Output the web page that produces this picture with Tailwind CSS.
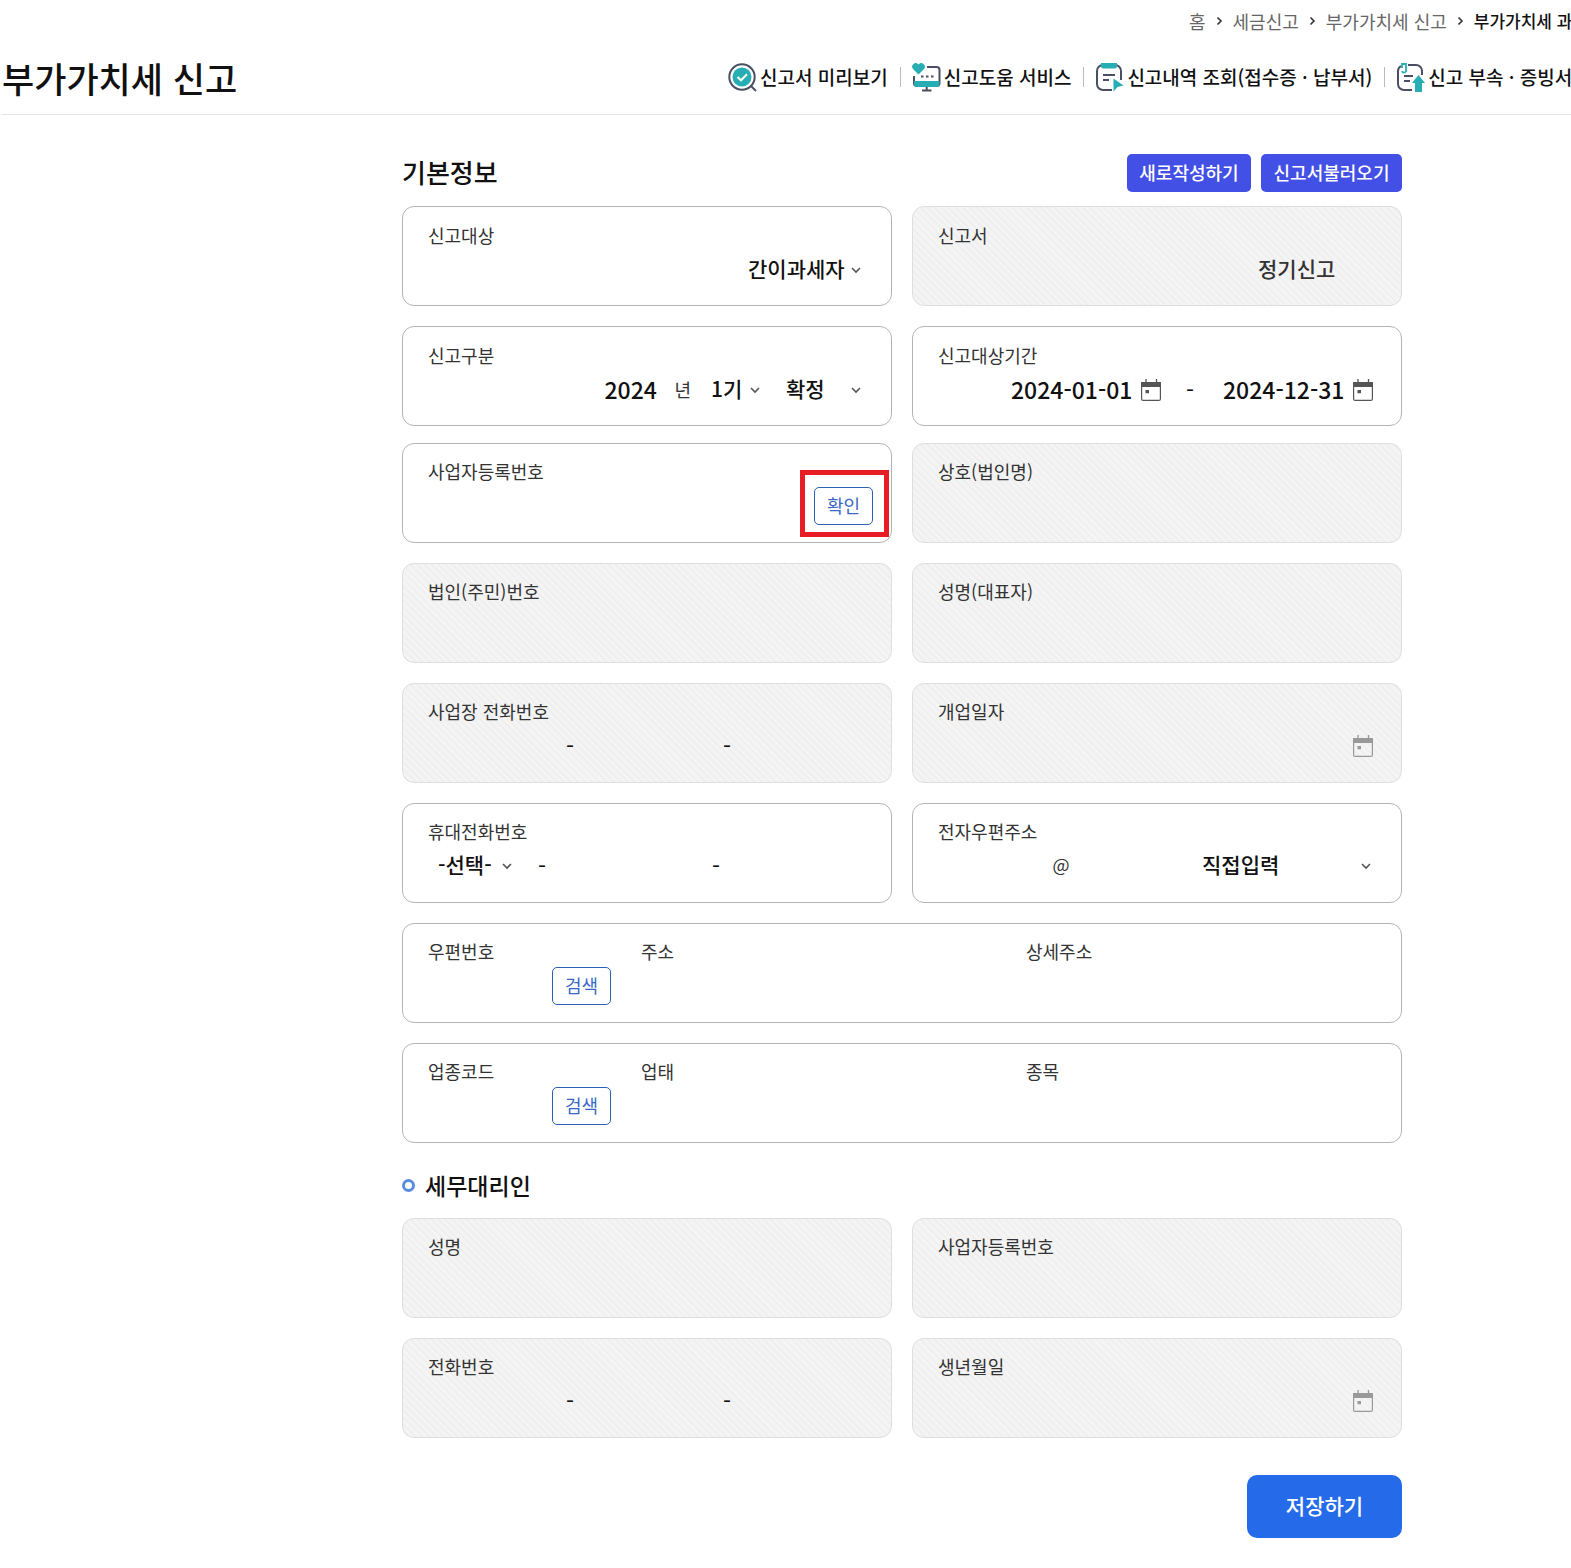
<!DOCTYPE html>
<html lang="ko">

<head>
    <meta charset="UTF-8">
    <meta name="viewport" content="width=device-width, initial-scale=1.0">
    <title>부가가치세 신고</title>
    <script src="https://cdn.jsdelivr.net/npm/@tailwindcss/browser@4"></script>
    <style>
        body {
            font-family: "Noto Sans CJK KR", "Noto Sans", sans-serif;
        }

        .stripe {
            background: repeating-linear-gradient(45deg, #f4f4f4 0 3px, #efefef 3px 5px);
        }
    </style>
</head>

<body class="bg-white text-[#111] overflow-x-hidden">

    <!-- icons -->
    <svg class="hidden" xmlns="http://www.w3.org/2000/svg">
        <symbol id="chevron" viewBox="0 0 10 10">
            <path d="M1 3l4 4 4-4" fill="none" stroke="#555" stroke-width="1.6" />
        </symbol>
        <symbol id="arrow" viewBox="0 0 7 10">
            <path d="M1.5 1.5L5 5 1.5 8.5" fill="none" stroke="#333" stroke-width="1.6" />
        </symbol>
        <symbol id="calendar" viewBox="0 0 20 22">
            <path d="M5 0v4M15.500 0v4" stroke="currentColor" stroke-width="1.300" />
            <rect x=".6" y="3.600" width="18.800" height="17.800" rx="1.500" fill="none" stroke="currentColor" stroke-width="1.200" />
            <path d="M0 3h20v5H0zM4.500 11H8v3.200H4.500z" fill="currentColor" />
        </symbol>
    </svg>

    <div class="min-w-[1800px] ml-0.5">
        <header class="border-b border-[#e4e4e4]">
            <nav class="flex justify-end pt-2 pb-0.5" aria-label="breadcrumb">
                <ol class="flex items-center gap-2.5 w-[613px] h-[26px] text-[18px] text-[#666] whitespace-nowrap">
                    <li><a href="#">홈</a></li>
                    <li><svg class="w-[7px] h-[10px]"><use href="#arrow" /></svg></li>
                    <li><a href="#">세금신고</a></li>
                    <li><svg class="w-[7px] h-[10px]"><use href="#arrow" /></svg></li>
                    <li><a href="#">부가가치세 신고</a></li>
                    <li><svg class="w-[7px] h-[10px]"><use href="#arrow" /></svg></li>
                    <li class="text-[17px] font-medium text-[#111]">부가가치세 과</li>
                </ol>
            </nav>
            <div class="flex items-center justify-between h-[78px] pt-1">
                <h1 class="text-[35px] leading-none font-medium">부가가치세 신고</h1>
                <ul class="flex items-center w-[1074px] text-[19px] font-medium whitespace-nowrap">
                    <li>
                        <a href="#" class="flex items-center gap-[3px]">
                            <svg class="w-[29px] h-[29px]" viewBox="0 0 29 29" fill="none">
                                <circle cx="14" cy="14" r="12.700" stroke="#4a4f63" stroke-width="2" />
                                <circle cx="14" cy="14" r="9.500" fill="#27aeb4" />
                                <path d="M9.500 14l3.500 3.300 6-6" stroke="#fff" stroke-width="2" />
                                <path d="M22.500 22.500l5.500 5.500" stroke="#4a4f63" stroke-width="2" />
                            </svg>
                            신고서 미리보기
                        </a>
                    </li>
                    <li class="w-px h-5 bg-[#bbb] ml-3 mr-[11px]"></li>
                    <li>
                        <a href="#" class="flex items-center gap-[3px]">
                            <svg class="w-[29px] h-[29px]" viewBox="0 0 29 29" fill="none">
                                <path d="M15 4h9.500a3 3 0 0 1 3 3v13a3 3 0 0 1-3 3H5a3 3 0 0 1-3-3v-7" stroke="#4a4f63" stroke-width="2" />
                                <path d="M2 18h25.500v3a3 3 0 0 1-3 3H5a3 3 0 0 1-3-3z" fill="#27aeb4" />
                                <path d="M14.700 24v4M10 27.500h9.500" stroke="#4a4f63" stroke-width="2" />
                                <path d="M9 12.500h2.500v2H9zM14 12.500h2.500v2H14zM19 12.500h2.500v2H19z" fill="#4a4f63" />
                                <path d="M6.500 11.500L1 6A3.400 3.400 0 0 1 6.500 1.500 3.400 3.400 0 0 1 12 6z" fill="#27aeb4" />
                            </svg>
                            신고도움 서비스
                        </a>
                    </li>
                    <li class="w-px h-5 bg-[#bbb] ml-3 mr-[11px]"></li>
                    <li>
                        <a href="#" class="flex items-center gap-[3px]">
                            <svg class="w-[29px] h-[29px]" viewBox="0 0 29 29" fill="none">
                                <path d="M17 27H8a6 6 0 0 1-6-6V8a6 6 0 0 1 6-6h12a6 6 0 0 1 6 6v9" stroke="#4a4f63" stroke-width="2" />
                                <path d="M6 0h16v3a2.500 2.500 0 0 1-2.500 2.500h-11A2.500 2.500 0 0 1 6 3z" fill="#27aeb4" />
                                <path d="M8 12h12M8 17h6" stroke="#4a4f63" stroke-width="2" />
                                <path d="M18.500 15.500l10 7-6 1.500-4 4.500z" fill="#27aeb4" />
                            </svg>
                            신고내역 조회(접수증 · 납부서)
                        </a>
                    </li>
                    <li class="w-px h-5 bg-[#bbb] ml-3 mr-[11px]"></li>
                    <li>
                        <a href="#" class="flex items-center gap-[3px]">
                            <svg class="w-[29px] h-[29px]" viewBox="0 0 29 29" fill="none">
                                <path d="M16 27H8a6 6 0 0 1-6-6V8a6 6 0 0 1 3-5M12 2h8a6 6 0 0 1 6 6v4" stroke="#4a4f63" stroke-width="2" />
                                <path d="M6 5V1h4v6a2 2 0 0 1-4 1" stroke="#27aeb4" stroke-width="1.800" />
                                <path d="M8 13h9M8 18h6" stroke="#4a4f63" stroke-width="2" />
                                <path d="M22.500 12l6.500 8h-3v9h-7v-9h-3z" fill="#27aeb4" />
                            </svg>
                            신고 부속 · 증빙서
                        </a>
                    </li>
                </ul>
            </div>
        </header>

        <main class="w-[1000px] mx-auto pb-7">
            <!-- 기본정보 -->
            <div class="flex items-center justify-between pt-[39px] pb-3.5">
                <h2 class="text-[26px] leading-[36px] pb-0.5 font-medium">기본정보</h2>
                <div class="flex gap-2.5">
                    <button type="button" class="w-[124px] h-[38px] pb-0.5 rounded-[5px] bg-[#4350e6] text-white text-[18px] font-medium">새로작성하기</button>
                    <button type="button" class="w-[141px] h-[38px] pb-0.5 rounded-[5px] bg-[#4350e6] text-white text-[18px] font-medium">신고서불러오기</button>
                </div>
            </div>

            <form>
                <div class="grid grid-cols-2 gap-5">
                    <div class="h-[100px] border border-[#b4b4b4] rounded-xl pt-[17px] pl-[25px]">
                        <label for="target" class="block text-[18px] leading-[22px] mb-0.5 text-[#333]">신고대상</label>
                        <div class="flex items-center justify-end h-11 pr-[30px]">
                            <select id="target" class="appearance-none w-[103px] pb-0.5 text-[21px] font-medium">
                                <option>간이과세자</option>
                            </select>
                            <svg class="w-2.5 h-2.5"><use href="#chevron" /></svg>
                        </div>
                    </div>
                    <div class="stripe h-[100px] border border-[#dedede] rounded-xl pt-[17px] pl-[25px]">
                        <label for="report" class="block text-[18px] leading-[22px] mb-0.5 text-[#333]">신고서</label>
                        <div class="flex items-center justify-end h-11 pr-[30px]">
                            <input id="report" type="text" value="정기신고" disabled class="w-[113px] pb-0.5 text-[21px] font-medium text-[#333]">
                        </div>
                    </div>
                    <div class="h-[100px] border border-[#b4b4b4] rounded-xl pt-[17px] pl-[25px]">
                        <label for="year" class="block text-[18px] leading-[22px] mb-0.5 text-[#333]">신고구분</label>
                        <div class="flex items-center justify-end h-11 pr-[30px]">
                            <input id="year" type="text" value="2024" class="w-[70px] pb-0.5 text-[23px] font-medium">
                            <span class="pb-0.5 text-[18px] text-[#333] mr-5">년</span>
                            <select aria-label="기수" class="appearance-none w-[39px] pb-0.5 text-[21px] font-medium">
                                <option>1기</option>
                            </select>
                            <svg class="w-2.5 h-2.5 mr-[26px]"><use href="#chevron" /></svg>
                            <select aria-label="구분" class="appearance-none w-[65px] pb-0.5 text-[21px] font-medium">
                                <option>확정</option>
                            </select>
                            <svg class="w-2.5 h-2.5"><use href="#chevron" /></svg>
                        </div>
                    </div>
                    <div class="h-[100px] border border-[#b4b4b4] rounded-xl pt-[17px] pl-[25px]">
                        <label for="from" class="block text-[18px] leading-[22px] mb-0.5 text-[#333]">신고대상기간</label>
                        <div class="flex items-center justify-end h-11 pr-7">
                            <input id="from" type="text" value="2024-01-01" class="w-[130px] pb-0.5 text-[23px] font-medium">
                            <button type="button" aria-label="시작일 선택" class="text-[#555]"><svg class="block w-5 h-[22px]"><use href="#calendar" /></svg></button>
                            <span class="w-[62px] pr-1 pb-0.5 text-center text-[23px]">-</span>
                            <input aria-label="종료일" type="text" value="2024-12-31" class="w-[130px] pb-0.5 text-[23px] font-medium">
                            <button type="button" aria-label="종료일 선택" class="text-[#555]"><svg class="block w-5 h-[22px]"><use href="#calendar" /></svg></button>
                        </div>
                    </div>
                </div>

                <div class="grid grid-cols-2 gap-5 mt-[17px]">
                    <div class="relative h-[100px] border border-[#b4b4b4] rounded-xl pt-4 pl-[25px]">
                        <label for="bizno" class="block text-[18px] leading-[22px] mb-0.5 text-[#333]">사업자등록번호</label>
                        <div class="flex items-center h-11 pr-[18px]">
                            <input id="bizno" type="text" class="flex-1 min-w-0 text-[21px] font-medium">
                            <button type="button" class="w-[59px] h-[38px] pb-0.5 rounded-[5px] border border-[#2c62b4] text-[#3a68c8] text-[18px]">확인</button>
                        </div>
                        <div class="absolute top-[26px] right-0.5 w-[89px] h-[67px] border-5 border-[#e81c24] pointer-events-none"></div>
                    </div>
                    <div class="stripe h-[100px] border border-[#dedede] rounded-xl pt-4 pl-[25px]">
                        <label for="company" class="block text-[18px] leading-[22px] mb-0.5 text-[#333]">상호(법인명)</label>
                        <input id="company" type="text" disabled class="block h-11 w-full text-[21px]">
                    </div>
                    <div class="stripe h-[100px] border border-[#dedede] rounded-xl pt-4 pl-[25px]">
                        <label for="corpno" class="block text-[18px] leading-[22px] mb-0.5 text-[#333]">법인(주민)번호</label>
                        <input id="corpno" type="text" disabled class="block h-11 w-full text-[21px]">
                    </div>
                    <div class="stripe h-[100px] border border-[#dedede] rounded-xl pt-4 pl-[25px]">
                        <label for="ceo" class="block text-[18px] leading-[22px] mb-0.5 text-[#333]">성명(대표자)</label>
                        <input id="ceo" type="text" disabled class="block h-11 w-full text-[21px]">
                    </div>
                    <div class="stripe h-[100px] border border-[#dedede] rounded-xl pt-4 pl-[25px]">
                        <label for="tel" class="block text-[18px] leading-[22px] mb-0.5 text-[#333]">사업장 전화번호</label>
                        <div class="flex items-center h-11 pr-[18px] text-[23px]">
                            <input id="tel" type="text" disabled class="w-[130px]">
                            <span class="w-6 pb-0.5 text-center">-</span>
                            <input aria-label="국번" type="text" disabled class="w-[133px]">
                            <span class="w-6 pb-0.5 text-center">-</span>
                            <input aria-label="끝번호" type="text" disabled class="flex-1 min-w-0">
                        </div>
                    </div>
                    <div class="stripe h-[100px] border border-[#dedede] rounded-xl pt-4 pl-[25px]">
                        <label for="opened" class="block text-[18px] leading-[22px] mb-0.5 text-[#333]">개업일자</label>
                        <div class="flex items-center h-11 pr-7">
                            <input id="opened" type="text" disabled class="flex-1 min-w-0">
                            <button type="button" disabled aria-label="개업일자 선택" class="text-[#999]"><svg class="block w-5 h-[22px]"><use href="#calendar" /></svg></button>
                        </div>
                    </div>
                    <div class="h-[100px] border border-[#b4b4b4] rounded-xl pt-4 pl-[25px]">
                        <label for="mobile" class="block text-[18px] leading-[22px] mb-0.5 text-[#333]">휴대전화번호</label>
                        <div class="flex items-center h-11 pl-2.5 pr-[18px] text-[23px]">
                            <select id="mobile" class="appearance-none w-16 pb-0.5 text-[21px] font-medium">
                                <option>-선택-</option>
                            </select>
                            <svg class="w-2.5 h-2.5 mr-[18px]"><use href="#chevron" /></svg>
                            <span class="w-6 pb-0.5 text-center">-</span>
                            <input aria-label="국번" type="text" class="w-[150px]">
                            <span class="w-6 pb-0.5 text-center">-</span>
                            <input aria-label="끝번호" type="text" class="flex-1 min-w-0">
                        </div>
                    </div>
                    <div class="h-[100px] border border-[#b4b4b4] rounded-xl pt-4 pl-[25px]">
                        <label for="email" class="block text-[18px] leading-[22px] mb-0.5 text-[#333]">전자우편주소</label>
                        <div class="flex items-center h-11 pr-[30px]">
                            <input id="email" type="text" class="flex-1 min-w-0">
                            <span class="w-6 pb-1 text-center text-[18px] text-[#333]">@</span>
                            <input aria-label="도메인" type="text" class="w-[129px]">
                            <select aria-label="도메인 선택" class="appearance-none w-[159px] pb-0.5 text-[21px] font-medium">
                                <option>직접입력</option>
                            </select>
                            <svg class="w-2.5 h-2.5"><use href="#chevron" /></svg>
                        </div>
                    </div>
                    <div class="col-span-2 flex h-[100px] border border-[#b4b4b4] rounded-xl pt-4 px-[25px]">
                        <div class="w-[213px]">
                            <label for="zip" class="block text-[18px] leading-[22px] mb-0.5 text-[#333]">우편번호</label>
                            <div class="flex items-center h-11">
                                <input id="zip" type="text" class="w-[124px]">
                                <button type="button" class="w-[59px] h-[38px] pb-0.5 rounded-[5px] border border-[#2c62b4] text-[#3a68c8] text-[18px]">검색</button>
                            </div>
                        </div>
                        <div class="w-[385px]">
                            <label for="addr" class="block text-[18px] leading-[22px] mb-0.5 text-[#333]">주소</label>
                            <input id="addr" type="text" class="block h-11 w-full">
                        </div>
                        <div class="flex-1">
                            <label for="addr2" class="block text-[18px] leading-[22px] mb-0.5 text-[#333]">상세주소</label>
                            <input id="addr2" type="text" class="block h-11 w-full">
                        </div>
                    </div>
                    <div class="col-span-2 flex h-[100px] border border-[#b4b4b4] rounded-xl pt-4 px-[25px]">
                        <div class="w-[213px]">
                            <label for="code" class="block text-[18px] leading-[22px] mb-0.5 text-[#333]">업종코드</label>
                            <div class="flex items-center h-11">
                                <input id="code" type="text" class="w-[124px]">
                                <button type="button" class="w-[59px] h-[38px] pb-0.5 rounded-[5px] border border-[#2c62b4] text-[#3a68c8] text-[18px]">검색</button>
                            </div>
                        </div>
                        <div class="w-[385px]">
                            <label for="kind" class="block text-[18px] leading-[22px] mb-0.5 text-[#333]">업태</label>
                            <input id="kind" type="text" class="block h-11 w-full">
                        </div>
                        <div class="flex-1">
                            <label for="item" class="block text-[18px] leading-[22px] mb-0.5 text-[#333]">종목</label>
                            <input id="item" type="text" class="block h-11 w-full">
                        </div>
                    </div>
                </div>

                <!-- 세무대리인 -->
                <h3 class="flex items-center gap-2.5 mt-6 mb-[15px] text-[23px] leading-9 font-medium">
                    <span class="w-[13px] h-[13px] rounded-full border-3 border-[#5b8bdf]"></span>
                    세무대리인
                </h3>
                <div class="grid grid-cols-2 gap-5">
                    <div class="stripe h-[100px] border border-[#dedede] rounded-xl pt-4 pl-[25px]">
                        <label for="agent" class="block text-[18px] leading-[22px] mb-0.5 text-[#333]">성명</label>
                        <input id="agent" type="text" disabled class="block h-11 w-full">
                    </div>
                    <div class="stripe h-[100px] border border-[#dedede] rounded-xl pt-4 pl-[25px]">
                        <label for="agentno" class="block text-[18px] leading-[22px] mb-0.5 text-[#333]">사업자등록번호</label>
                        <input id="agentno" type="text" disabled class="block h-11 w-full">
                    </div>
                    <div class="stripe h-[100px] border border-[#dedede] rounded-xl pt-4 pl-[25px]">
                        <label for="agenttel" class="block text-[18px] leading-[22px] mb-0.5 text-[#333]">전화번호</label>
                        <div class="flex items-center h-11 pr-[18px] text-[23px]">
                            <input id="agenttel" type="text" disabled class="w-[130px]">
                            <span class="w-6 pb-0.5 text-center">-</span>
                            <input aria-label="국번" type="text" disabled class="w-[133px]">
                            <span class="w-6 pb-0.5 text-center">-</span>
                            <input aria-label="끝번호" type="text" disabled class="flex-1 min-w-0">
                        </div>
                    </div>
                    <div class="stripe h-[100px] border border-[#dedede] rounded-xl pt-4 pl-[25px]">
                        <label for="birth" class="block text-[18px] leading-[22px] mb-0.5 text-[#333]">생년월일</label>
                        <div class="flex items-center h-11 pr-7">
                            <input id="birth" type="text" disabled class="flex-1 min-w-0">
                            <button type="button" disabled aria-label="생년월일 선택" class="text-[#999]"><svg class="block w-5 h-[22px]"><use href="#calendar" /></svg></button>
                        </div>
                    </div>
                </div>

                <div class="flex justify-end mt-[37px]">
                    <button type="submit" class="w-[155px] h-[63px] pb-0.5 rounded-[10px] bg-[#256be9] text-white text-[21px] font-medium">저장하기</button>
                </div>
            </form>
        </main>
    </div>

</body>

</html>
